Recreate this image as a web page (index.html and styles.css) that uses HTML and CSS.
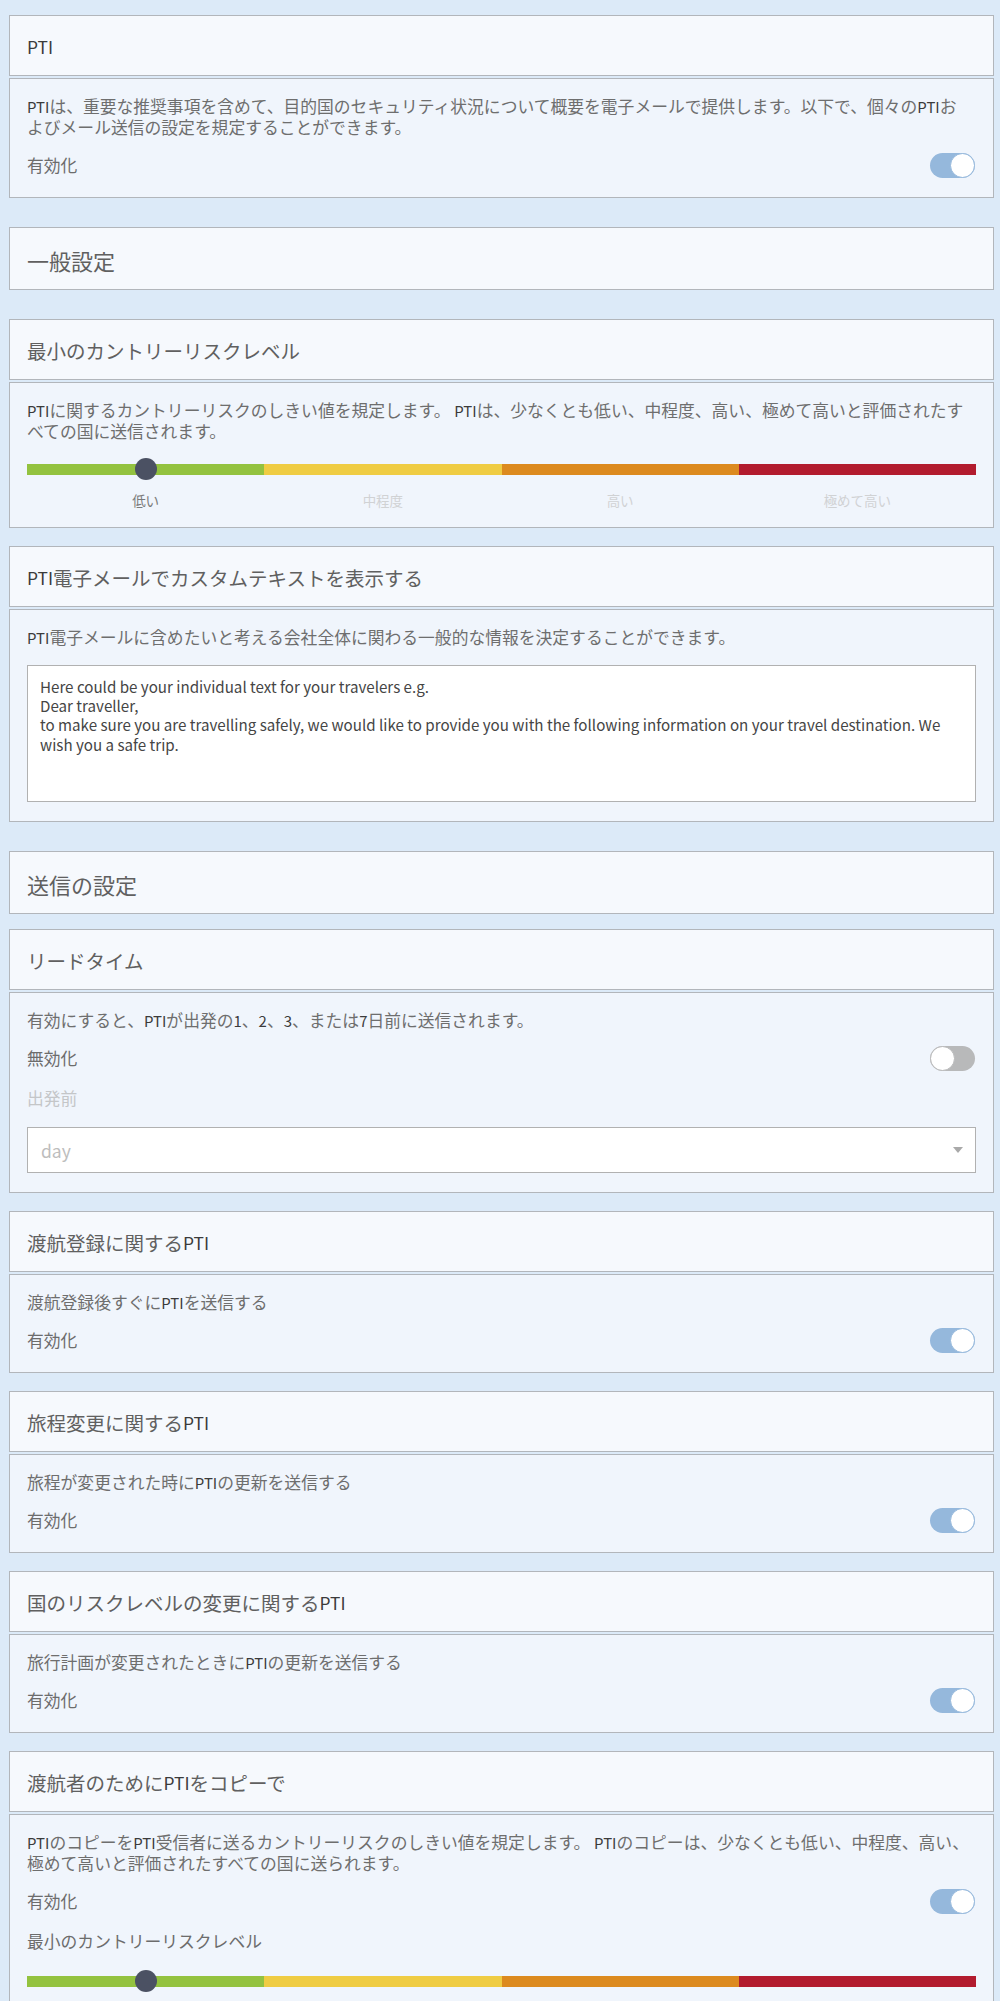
FILE: index.html
```html
<!DOCTYPE html>
<html lang="ja">
<head>
<meta charset="utf-8">
<title>PTI設定</title>
<link rel="stylesheet" href="styles.css">
</head>
<body>
<main class="page">

  <section class="card">
    <div class="card-head"><span class="lat">PTI</span></div>
    <div class="card-body">
      <p class="desc"><span class="lat">PTI</span>は、重要な推奨事項を含めて、目的国のセキュリティ状況について概要を電子メールで提供します。以下で、個々の<span class="lat">PTI</span>お<br>よびメール送信の設定を規定することができます。</p>
      <div class="switch-row">
        <span class="switch-label">有効化</span>
        <span class="toggle on"><span class="knob"></span></span>
      </div>
    </div>
  </section>

  <div class="section-title first">一般設定</div>

  <section class="card">
    <div class="card-head">最小のカントリーリスクレベル</div>
    <div class="card-body">
      <p class="desc"><span class="lat">PTI</span>に関するカントリーリスクのしきい値を規定します。 <span class="lat">PTI</span>は、少なくとも低い、中程度、高い、極めて高いと評価されたす<br>べての国に送信されます。</p>
      <div class="scale">
        <div class="scale-track">
          <span class="seg low"></span><span class="seg mid"></span><span class="seg high"></span><span class="seg max"></span>
        </div>
        <span class="scale-knob"></span>
      </div>
      <div class="scale-labels">
        <span class="active">低い</span><span>中程度</span><span>高い</span><span>極めて高い</span>
      </div>
    </div>
  </section>

  <section class="card">
    <div class="card-head"><span class="lat">PTI</span>電子メールでカスタムテキストを表示する</div>
    <div class="card-body">
      <p class="desc"><span class="lat">PTI</span>電子メールに含めたいと考える会社全体に関わる一般的な情報を決定することができます。</p>
      <div class="textbox">Here could be your individual text for your travelers e.g.<br>Dear traveller,<br>to make sure you are travelling safely, we would like to provide you with the following information on your travel destination. We<br>wish you a safe trip.</div>
    </div>
  </section>

  <div class="section-title second">送信の設定</div>

  <section class="card">
    <div class="card-head">リードタイム</div>
    <div class="card-body">
      <p class="desc">有効にすると、<span class="lat">PTI</span>が出発の<span class="lat">1</span>、<span class="lat">2</span>、<span class="lat">3</span>、または<span class="lat">7</span>日前に送信されます。</p>
      <div class="switch-row">
        <span class="switch-label">無効化</span>
        <span class="toggle off"><span class="knob"></span></span>
      </div>
      <div class="field-label disabled">出発前</div>
      <div class="select">
        <span class="placeholder">day</span>
        <span class="caret"></span>
      </div>
    </div>
  </section>

  <section class="card">
    <div class="card-head">渡航登録に関する<span class="lat">PTI</span></div>
    <div class="card-body">
      <p class="desc">渡航登録後すぐに<span class="lat">PTI</span>を送信する</p>
      <div class="switch-row">
        <span class="switch-label">有効化</span>
        <span class="toggle on"><span class="knob"></span></span>
      </div>
    </div>
  </section>

  <section class="card">
    <div class="card-head">旅程変更に関する<span class="lat">PTI</span></div>
    <div class="card-body">
      <p class="desc">旅程が変更された時に<span class="lat">PTI</span>の更新を送信する</p>
      <div class="switch-row">
        <span class="switch-label">有効化</span>
        <span class="toggle on"><span class="knob"></span></span>
      </div>
    </div>
  </section>

  <section class="card">
    <div class="card-head">国のリスクレベルの変更に関する<span class="lat">PTI</span></div>
    <div class="card-body">
      <p class="desc">旅行計画が変更されたときに<span class="lat">PTI</span>の更新を送信する</p>
      <div class="switch-row">
        <span class="switch-label">有効化</span>
        <span class="toggle on"><span class="knob"></span></span>
      </div>
    </div>
  </section>

  <section class="card">
    <div class="card-head">渡航者のために<span class="lat">PTI</span>をコピーで</div>
    <div class="card-body">
      <p class="desc"><span class="lat">PTI</span>のコピーを<span class="lat">PTI</span>受信者に送るカントリーリスクのしきい値を規定します。 <span class="lat">PTI</span>のコピーは、少なくとも低い、中程度、高い、<br>極めて高いと評価されたすべての国に送られます。</p>
      <div class="switch-row">
        <span class="switch-label">有効化</span>
        <span class="toggle on"><span class="knob"></span></span>
      </div>
      <div class="field-label">最小のカントリーリスクレベル</div>
      <div class="scale scale-late">
        <div class="scale-track">
          <span class="seg low"></span><span class="seg mid"></span><span class="seg high"></span><span class="seg max"></span>
        </div>
        <span class="scale-knob"></span>
      </div>
      <div class="scale-labels">
        <span class="active">低い</span><span>中程度</span><span>高い</span><span>極めて高い</span>
      </div>
    </div>
  </section>

</main>
</body>
</html>
```

FILE: styles.css
```css
* {
  box-sizing: border-box;
}

html,
body {
  margin: 0;
  padding: 0;
}

body {
  background: #dceaf8;
  font-family: "Noto Sans CJK JP", "Noto Sans", sans-serif;
  color: #6e6e6e;
}

.page {
  padding: 15px 6px 40px 9px;
}

/* vertical rhythm between cards */
.page > .card {
  margin-top: 18px;
}

.page > .card:first-child {
  margin-top: 0;
}

.page > .section-title + .card {
  margin-top: 0;
}

.card-head {
  height: 61px;
  display: flex;
  align-items: center;
  padding: 3px 17px 0;
  background: #f6f9fd;
  border: 1px solid #b2b6bb;
  font-size: 19.5px;
  line-height: 24px;
  color: #606060;
  white-space: nowrap;
}

.card-body {
  margin-top: 2px;
  padding: 17px 17px 19px;
  background: #f0f5fc;
  border: 1px solid #b2b6bb;
}

.section-title {
  height: 63px;
  display: flex;
  align-items: center;
  padding: 3px 17px 0;
  background: #f6f9fd;
  border: 1px solid #b2b6bb;
  font-size: 22px;
  line-height: 26px;
  color: #606060;
}

.section-title.first {
  margin: 29px 0 29px;
}

.section-title.second {
  margin: 29px 0 15px;
}

.lat {
  font-size: 0.89em;
  color: #3b3b3b;
}

.desc {
  margin: 0;
  font-size: 16.8px;
  line-height: 21px;
  color: #6e6e6e;
}

.switch-row {
  display: flex;
  align-items: center;
  justify-content: space-between;
  height: 26px;
  margin-top: 14px;
}

.switch-label {
  font-size: 16.8px;
  line-height: 21px;
  color: #6c6c6c;
}

.toggle {
  display: flex;
  align-items: center;
  width: 45px;
  height: 25px;
  border-radius: 13px;
  margin-right: 1px;
}

.toggle .knob {
  width: 25px;
  height: 25px;
  border-radius: 50%;
  background: #ffffff;
}

.toggle.on {
  justify-content: flex-end;
  background: #95b8dc;
}

.toggle.on .knob {
  border: 1.5px solid #95b8dc;
}

.toggle.off {
  justify-content: flex-start;
  background: #b8b9ba;
}

.toggle.off .knob {
  border: 1.5px solid #b8b9ba;
}

.field-label {
  margin-top: 17px;
  font-size: 16.8px;
  line-height: 21px;
  color: #6c6c6c;
}

.field-label.disabled {
  color: #c4c6c8;
}

.select {
  display: flex;
  align-items: center;
  justify-content: space-between;
  height: 46px;
  margin-top: 18px;
  padding: 0 12px 0 13px;
  background: #ffffff;
  border: 1px solid #b1b1b1;
}

.placeholder {
  font-size: 17.5px;
  color: #bdbdbd;
}

.caret {
  width: 0;
  height: 0;
  border-left: 5px solid transparent;
  border-right: 5px solid transparent;
  border-top: 6px solid #a9a9a9;
}

.scale {
  position: relative;
  display: flex;
  align-items: center;
  height: 22px;
  margin-top: 16px;
}

.scale-late {
  margin-top: 18px;
}

.scale-track {
  display: grid;
  grid-template-columns: repeat(4, 1fr);
  width: 100%;
  height: 11px;
}

.seg.low {
  background: #93c23f;
}

.seg.mid {
  background: #efcc43;
}

.seg.high {
  background: #dc8a1f;
}

.seg.max {
  background: #b21b2e;
}

.scale-knob {
  position: absolute;
  top: 0;
  left: 12.5%;
  width: 22px;
  height: 22px;
  margin-left: -11px;
  border-radius: 50%;
  background: #4b5163;
}

.scale-labels {
  display: grid;
  grid-template-columns: repeat(4, 1fr);
  margin-top: 12px;
  font-size: 13.5px;
  line-height: 16px;
  text-align: center;
  color: #d0d2d4;
}

.scale-labels .active {
  color: #7a7a7a;
}

.textbox {
  height: 137px;
  margin-top: 17px;
  padding: 11px 12px;
  background: #ffffff;
  border: 1px solid #b1b1b1;
  font-size: 15.15px;
  line-height: 19.2px;
  color: #454545;
}
```
